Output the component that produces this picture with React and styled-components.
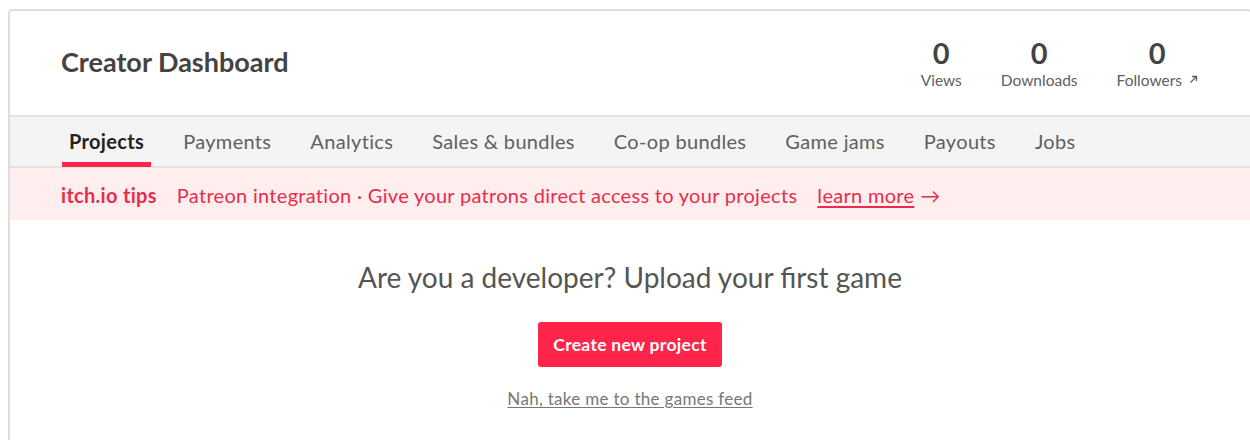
import React from "react";
import styled, { createGlobalStyle } from "styled-components";

const Global = createGlobalStyle`
  html, body {
    margin: 0;
    padding: 0;
    background: #ffffff;
    overflow: hidden;
  }
  body {
    padding: 9px 0 0 8px;
    font-family: Lato, "Open Sans", sans-serif;
  }
`;

const Card = styled.div`
  width: 1244px;
  border: 2px solid #dddddd;
  border-radius: 4px;
  background: #ffffff;
  box-sizing: border-box;
  min-height: 480px;
`;

const Header = styled.header`
  display: flex;
  align-items: center;
  justify-content: space-between;
  height: 106px;
  padding: 0 52px 0 51px;
  border-bottom: 2px solid #e3e3e3;
  box-sizing: border-box;
`;

const Title = styled.h2`
  margin: 0;
  padding-bottom: 4px;
  font-size: 27px;
  font-weight: 700;
  color: #434343;
`;

const Stats = styled.div`
  display: flex;
  gap: 39px;
  padding-top: 3px;
`;

const Stat = styled.div`
  display: flex;
  flex-direction: column;
  align-items: center;
  color: #434343;
`;

const StatValue = styled.div`
  font-size: 29px;
  font-weight: 700;
  line-height: 30px;
`;

const StatLabel = styled.div`
  font-size: 15.5px;
  color: #606060;
  line-height: 24px;
  display: flex;
  align-items: center;
  gap: 7px;
`;

const Nav = styled.nav`
  display: flex;
  gap: 25px;
  height: 51px;
  padding: 0 52px;
  background: #f4f4f4;
  border-bottom: 2px solid #e3e3e3;
  box-sizing: border-box;
`;

const Tab = styled.a`
  display: flex;
  align-items: center;
  padding: 3px 7px 0;
  font-size: 20px;
  letter-spacing: 0.33px;
  color: ${(p) => (p.$active ? "#222222" : "#606060")};
  font-weight: ${(p) => (p.$active ? 700 : 400)};
  border-bottom: 5px solid ${(p) => (p.$active ? "#ff2449" : "transparent")};
  margin-bottom: -1px;
  text-decoration: none;
`;

const Tips = styled.div`
  display: flex;
  align-items: center;
  gap: 20px;
  height: 52px;
  padding: 2px 51px 0;
  box-sizing: border-box;
  background: #ffeeee;
  color: #e92c4c;
  font-size: 20px;
  letter-spacing: 0.3px;
`;

const TipsLabel = styled.strong`
  font-weight: 700;
`;

const LearnMore = styled.a`
  color: #e92c4c;
  display: flex;
  align-items: center;
  gap: 6px;
  span {
    text-decoration: underline;
    text-underline-offset: 3px;
  }
`;

const Empty = styled.section`
  display: flex;
  flex-direction: column;
  align-items: center;
  padding-top: 40px;
`;

const EmptyTitle = styled.h2`
  margin: 0;
  font-size: 28px;
  font-weight: 400;
  color: #555555;
  line-height: 34px;
`;

const PrimaryButton = styled.button`
  margin-top: 28px;
  height: 45px;
  padding: 0 15px;
  border: none;
  border-radius: 3px;
  background: #ff2449;
  color: #ffffff;
  font-family: inherit;
  font-size: 17.5px;
  letter-spacing: 0.3px;
  font-weight: 700;
  cursor: pointer;
`;

const FeedLink = styled.a`
  margin-top: 21px;
  font-size: 17px;
  letter-spacing: 0.3px;
  color: #777777;
  text-decoration: underline;
  text-underline-offset: 2px;
`;

const ExternalArrow = () => (
  <svg width="9" height="9" viewBox="0 0 9 9" fill="none" stroke="#606060" strokeWidth="1.3">
    <path d="M1.5 7.5 L7.5 1.5 M3 1.5 H7.5 V6" />
  </svg>
);

const tabs = [
  "Projects",
  "Payments",
  "Analytics",
  "Sales & bundles",
  "Co-op bundles",
  "Game jams",
  "Payouts",
  "Jobs",
];

export default function App() {
  return (
    <>
      <Global />
      <Card>
        <Header>
          <Title>Creator Dashboard</Title>
          <Stats>
            <Stat>
              <StatValue>0</StatValue>
              <StatLabel>Views</StatLabel>
            </Stat>
            <Stat>
              <StatValue>0</StatValue>
              <StatLabel>Downloads</StatLabel>
            </Stat>
            <Stat>
              <StatValue>0</StatValue>
              <StatLabel>
                Followers <ExternalArrow />
              </StatLabel>
            </Stat>
          </Stats>
        </Header>
        <Nav>
          {tabs.map((t, i) => (
            <Tab key={t} $active={i === 0}>
              {t}
            </Tab>
          ))}
        </Nav>
        <Tips>
          <TipsLabel>itch.io tips</TipsLabel>
          <span>Patreon integration · Give your patrons direct access to your projects</span>
          <LearnMore>
            <span>learn more</span> →
          </LearnMore>
        </Tips>
        <Empty>
          <EmptyTitle>Are you a developer? Upload your first game</EmptyTitle>
          <PrimaryButton>Create new project</PrimaryButton>
          <FeedLink>Nah, take me to the games feed</FeedLink>
        </Empty>
      </Card>
    </>
  );
}
